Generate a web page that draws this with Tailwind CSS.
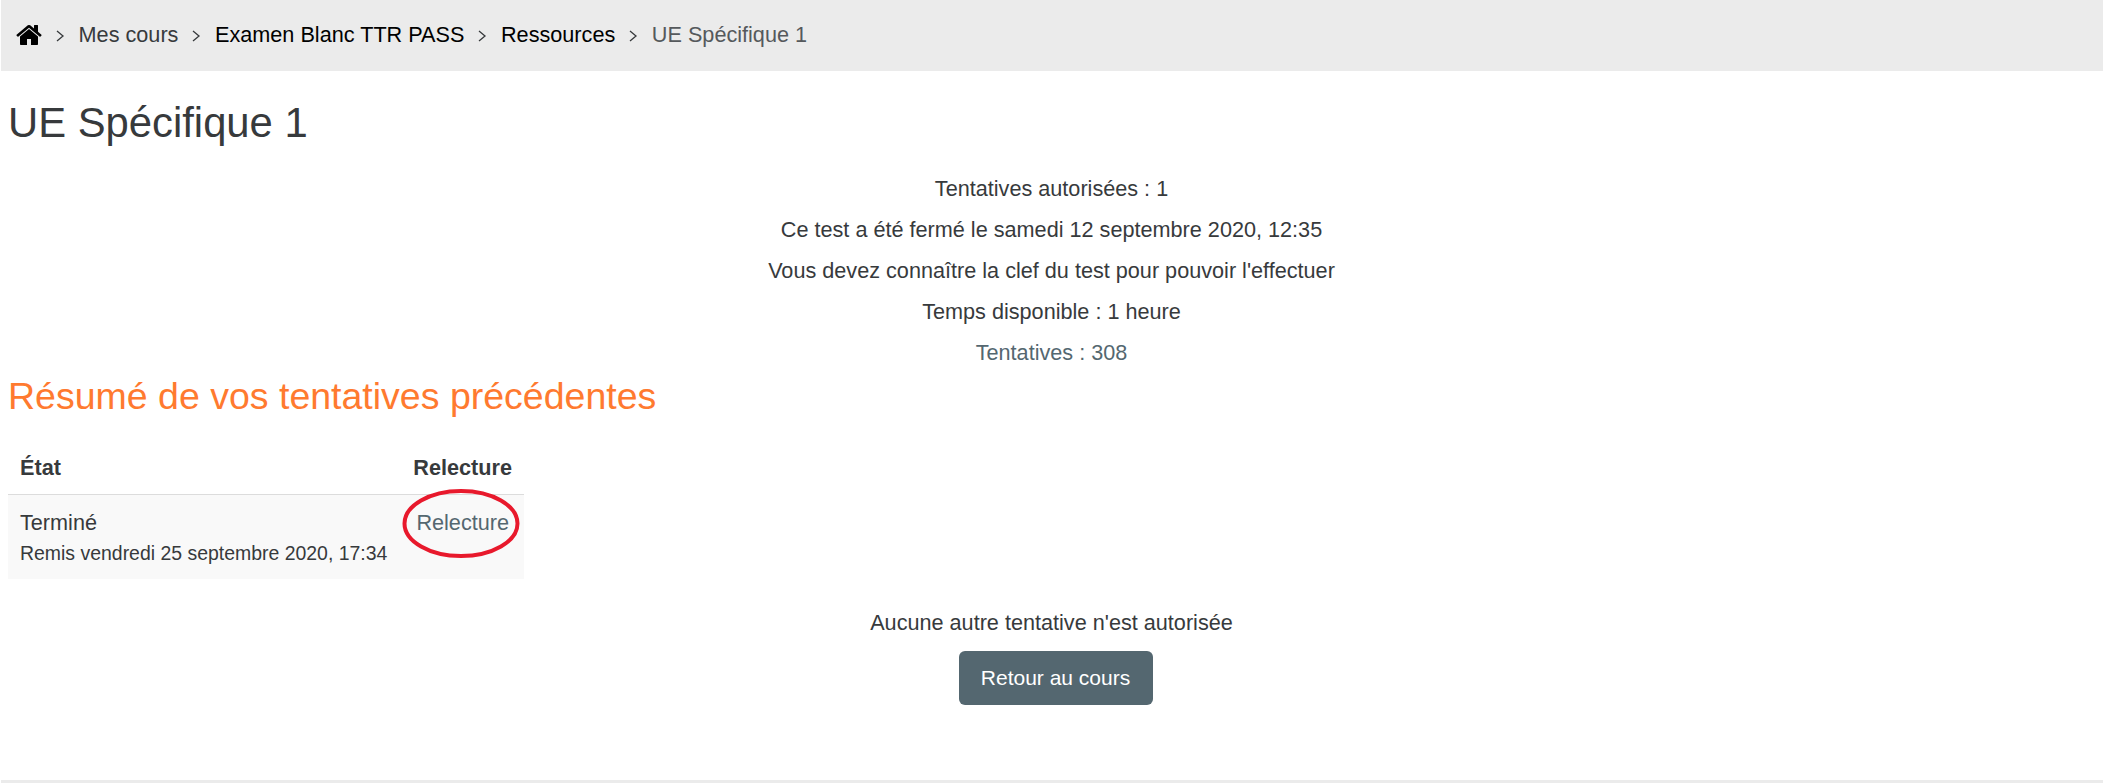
<!DOCTYPE html>
<html lang="fr">
<head>
<meta charset="utf-8">
<script src="https://cdn.jsdelivr.net/npm/@tailwindcss/browser@4"></script>
</head>
<body class="bg-white font-['Liberation_Sans',Arial,sans-serif] text-[21.65px] text-[#373a3c] overflow-hidden">
<div class="h-[783px] flex flex-col pl-px">
  <nav class="h-[71px] shrink-0 bg-[#ebebeb] flex items-center pl-[15px] text-[#373a3c]">
    <svg class="w-[26px] h-[20px] -mt-[2px]" viewBox="0 256 1664 1280" fill="#000"><path d="M1408 992v480q0 26-19 45t-45 19h-384v-384h-256v384h-384q-26 0-45-19t-19-45v-480q0-1 .5-3t.5-3l575-474 575 474q1 2 1 6zm223-69l-62 74q-8 9-21 11h-3q-13 0-21-7l-692-577-692 577q-12 8-24 7-13-2-21-11l-62-74q-8-10-7-23.5t11-22.5l719-599q32-26 76-26t76 26l244 204v-195q0-14 9-23t23-9h192q14 0 23 9t9 23v408l219 182q10 9 11 22.5t-7 23.5z"/></svg>
    <span class="mx-[12.8px]"><svg class="w-[11px] h-[14px]" viewBox="0 0 11 14" fill="none" stroke="#373a3c" stroke-width="1.3"><path d="M2 2l6 5-6 5"/></svg></span>
    <span>Mes cours</span>
    <span class="mx-[12.8px]"><svg class="w-[11px] h-[14px]" viewBox="0 0 11 14" fill="none" stroke="#373a3c" stroke-width="1.3"><path d="M2 2l6 5-6 5"/></svg></span>
    <span class="text-black">Examen Blanc TTR PASS</span>
    <span class="mx-[12.8px]"><svg class="w-[11px] h-[14px]" viewBox="0 0 11 14" fill="none" stroke="#373a3c" stroke-width="1.3"><path d="M2 2l6 5-6 5"/></svg></span>
    <span class="text-black">Ressources</span>
    <span class="mx-[12.8px]"><svg class="w-[11px] h-[14px]" viewBox="0 0 11 14" fill="none" stroke="#373a3c" stroke-width="1.3"><path d="M2 2l6 5-6 5"/></svg></span>
    <span class="text-[#55595c]">UE Spécifique 1</span>
  </nav>
  <main class="flex-1 pl-[7px] relative">
    <h1 class="text-[41.8px] leading-[48px] mt-[28px] text-[#373a3c]">UE Spécifique 1</h1>
    <div class="mt-[21px] pr-[8px] text-center leading-[41px]">
      <p>Tentatives autorisées : 1</p>
      <p>Ce test a été fermé le samedi 12 septembre 2020, 12:35</p>
      <p>Vous devez connaître la clef du test pour pouvoir l'effectuer</p>
      <p>Temps disponible : 1 heure</p>
      <p class="text-[#546770]">Tentatives : 308</p>
    </div>
    <h2 class="text-[37.5px] leading-[44px] text-[#ff7a2f] mt-[1px]">Résumé de vos tentatives précédentes</h2>
    <div class="w-[516px] mt-[23px]">
      <div class="h-[54px] pt-[2px] border-b border-[#dcdcdc] flex items-center justify-between px-[12px] font-bold">
        <span>État</span><span>Relecture</span>
      </div>
      <div class="relative h-[84px] bg-[#f9f9f9] flex items-start justify-between pl-[12px] pr-[15px]">
        <div>
          <div class="mt-[14px] leading-[28px]">Terminé</div>
          <div class="text-[19.45px] leading-[28px] mt-[2px]">Remis vendredi 25 septembre 2020, 17:34</div>
        </div>
        <div class="mt-[14px] leading-[28px] text-[#546770]">Relecture</div>
        <svg class="absolute left-[394px] -top-[6px] w-[118px] h-[69px]" viewBox="0 0 118 69" fill="none"><ellipse cx="59" cy="34.5" rx="56.5" ry="32.5" stroke="#e8192c" stroke-width="4"/></svg>
      </div>
    </div>
    <div class="pr-[8px] text-center mt-[29px] leading-[30px]">Aucune autre tentative n'est autorisée</div>
    <div class="flex justify-center mt-[13px]">
      <a class="w-[194px] h-[54px] rounded-[6px] bg-[#546770] text-white flex items-center justify-center text-[21px]">Retour au cours</a>
    </div>
    <div class="absolute left-0 right-0 bottom-0 h-[3px] bg-[#ebebeb]"></div>
  </main>
</div>
</body>
</html>
